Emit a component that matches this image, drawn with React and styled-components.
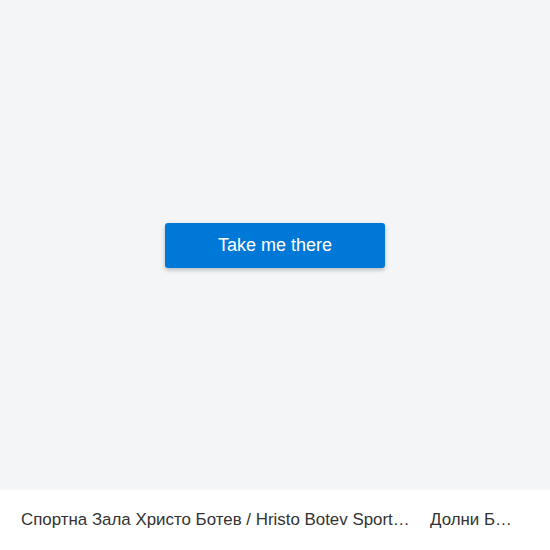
import styled, { createGlobalStyle } from 'styled-components';

const GlobalStyle = createGlobalStyle`
  html, body {
    margin: 0;
    padding: 0;
    background: #f4f5f7;
    font-family: "Liberation Sans", Arial, sans-serif;
  }
`;

const Page = styled.div`
  width: 550px;
  height: 550px;
  display: flex;
  flex-direction: column;
  background: #f4f5f7;
`;

const Stage = styled.main`
  flex: 1;
  display: flex;
  align-items: center;
  justify-content: center;
`;

const TakeButton = styled.button`
  width: 220px;
  height: 45px;
  margin-top: 1px;
  border: none;
  border-radius: 3px;
  background: #0078d7;
  color: #ffffff;
  font-family: "Liberation Sans", Arial, sans-serif;
  font-size: 18px;
  cursor: pointer;
  box-shadow: 0 2px 4px rgba(0, 0, 0, 0.25);
`;

const Footer = styled.footer`
  height: 60px;
  background: #ffffff;
  display: flex;
  align-items: center;
  gap: 18px;
  padding: 0 20px 0 21px;
  box-sizing: border-box;
`;

const Crumb = styled.span`
  flex: none;
  width: ${(p) => p.$w}px;
  white-space: nowrap;
  overflow: hidden;
  text-overflow: ellipsis;
  color: #333333;
  font-size: 16.9px;
  line-height: 20px;
`;

export default function App() {
  return (
    <>
      <GlobalStyle />
      <Page>
        <Stage>
          <TakeButton type="button">Take me there</TakeButton>
        </Stage>
        <Footer>
          <Crumb $w={391}>Спортна Зала Христо Ботев / Hristo Botev Sports Hall</Crumb>
          <Crumb $w={84}>Долни Богров</Crumb>
        </Footer>
      </Page>
    </>
  );
}
